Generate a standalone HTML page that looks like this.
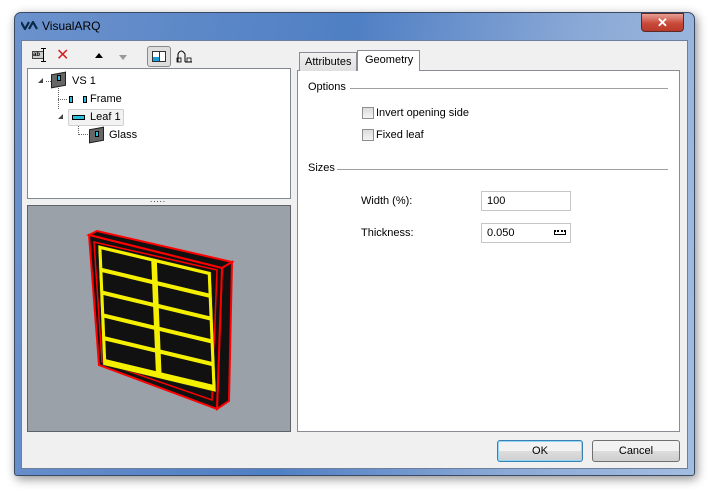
<!DOCTYPE html>
<html><head><style>
*{margin:0;padding:0;box-sizing:border-box}
body{width:712px;height:496px;background:#fff;position:relative;overflow:hidden;font-family:"Liberation Sans",sans-serif;font-size:11px;color:#000}
.a{position:absolute}
.win{left:14px;top:12px;width:681px;height:464px;border-radius:7px 7px 3px 3px;border:1px solid #3a4a66;background:linear-gradient(100deg,#6c92cc 0%,#4f7fc4 45%,#8ba9d6 75%,#a3bde0 100%);box-shadow:2px 3px 10px rgba(0,0,0,.45)}
.client{left:21px;top:40px;width:667px;height:429px;background:#f0f0f0;border:1px solid #6d7f9c}
.tb{font-size:12px;color:#000}
.cb{width:12px;height:12px;border:1px solid #8f8f8f;background:linear-gradient(#dcdcdc,#f4f4f4)}
.inp{height:20px;border:1px solid #c5c5c5;background:#fff;padding:3px 5px;font-size:11px}
.btn{height:22px;border:1px solid #707070;border-radius:3px;background:linear-gradient(#f2f2f2 50%,#dddddd 50%,#cfcfcf);text-align:center;line-height:20px;font-size:11px}
</style></head><body>
<div class="a win"></div>
<svg class="a" style="left:21px;top:21px" width="18" height="9"><path d="M0 1L4 8L8 1M8 8L12 1L16 8" fill="none" stroke="#0b2a4a" stroke-width="2.2"/></svg>
<div class="a tb" style="left:42px;top:19px">VisualARQ</div>
<div class="a" style="left:641px;top:13px;width:43px;height:19px;border:1px solid #5a2a2a;border-radius:0 0 4px 4px;background:linear-gradient(#e8a096,#c9493a 55%,#b83a2b);color:#fff;font-weight:bold;font-size:13px;text-align:center;line-height:17px">✕</div>
<div class="a client"></div>
<div class="a" style="left:32px;top:51px;width:12px;height:8px;border:1px solid #444;background:#ccc;font-size:6px;line-height:6px;font-weight:bold">ab</div>
<div class="a" style="left:43px;top:48px;width:1px;height:14px;background:#000"></div>
<div class="a" style="left:41px;top:48px;width:5px;height:1px;background:#000"></div>
<div class="a" style="left:41px;top:61px;width:5px;height:1px;background:#000"></div>
<div class="a" style="left:56px;top:45px;color:#d42020;font-size:16px">✕</div>
<div class="a" style="left:95px;top:53px;border:4px solid transparent;border-bottom:5px solid #000;border-top:0"></div>
<div class="a" style="left:119px;top:55px;border:4px solid transparent;border-top:5px solid #999;border-bottom:0"></div>
<div class="a" style="left:147px;top:46px;width:24px;height:21px;border:1px solid #8a8a8a;border-radius:3px;background:#dedede"></div>
<div class="a" style="left:152px;top:51px;width:14px;height:11px;border:1px solid #333;background:#fff"></div>
<div class="a" style="left:153px;top:57px;width:6px;height:4px;background:#1aa0d8"></div>
<div class="a" style="left:159px;top:51px;width:1px;height:11px;background:#333"></div>
<svg class="a" style="left:176px;top:48px" width="18" height="16"><path d="M2 14V6Q5 0 9 6V14M9 14H16" fill="none" stroke="#000"/><rect x="1" y="10" width="4" height="4" fill="none" stroke="#000" stroke-width=".8"/><rect x="11" y="10" width="4" height="4" fill="none" stroke="#000" stroke-width=".8"/></svg>
<div class="a" style="left:27px;top:68px;width:264px;height:131px;background:#fff;border:1px solid #828790"></div>
<svg class="a" style="left:37px;top:77px" width="8" height="8"><path d="M6 1V6H1Z" fill="#444"/></svg>
<svg class="a" style="left:57px;top:113px" width="8" height="8"><path d="M6 1V6H1Z" fill="#444"/></svg>
<div class="a" style="left:46px;top:81px;width:5px;border-top:1px dotted #666"></div>
<div class="a" style="left:58px;top:88px;height:21px;border-left:1px dotted #666"></div>
<div class="a" style="left:58px;top:99px;width:9px;border-top:1px dotted #666"></div>
<div class="a" style="left:78px;top:124px;height:11px;border-left:1px dotted #666"></div>
<div class="a" style="left:78px;top:134px;width:10px;border-top:1px dotted #666"></div>
<div class="a" style="left:51px;top:73px;width:15px;height:14px;background:#666;border:1px solid #222;transform:skewY(-10deg)"></div>
<div class="a" style="left:57px;top:75px;width:4px;height:6px;background:#29c0e0;border:1px solid #000"></div>
<div class="a" style="left:72px;top:75px;font-size:11px">VS 1</div>
<div class="a" style="left:69px;top:96px;width:4px;height:7px;border:1px solid #000;background:#29c0e0"></div>
<div class="a" style="left:83px;top:96px;width:4px;height:7px;border:1px solid #000;background:#29c0e0"></div>
<div class="a" style="left:90px;top:93px">Frame</div>
<div class="a" style="left:68px;top:109px;width:56px;height:17px;border:1px solid #d0d0d0;border-radius:2px;background:#f2f2f2"></div>
<div class="a" style="left:72px;top:115px;width:13px;height:5px;border:1px solid #000;background:#29c0e0"></div>
<div class="a" style="left:90px;top:111px">Leaf 1</div>
<div class="a" style="left:89px;top:128px;width:15px;height:14px;background:#666;border:1px solid #222;transform:skewY(-10deg)"></div>
<div class="a" style="left:95px;top:131px;width:4px;height:6px;background:#29c0e0;border:1px solid #000"></div>
<div class="a" style="left:109px;top:129px">Glass</div>
<div class="a" style="left:150px;top:197px;font-size:8px;letter-spacing:1px;line-height:6px">.....</div>
<div class="a" style="left:27px;top:205px;width:264px;height:227px;background:#9aa1a8;border:1px solid #5f6368"></div>
<svg class="a" style="left:0;top:0" width="300" height="440">
<polygon points="89,235 97,231 232,262 222,268" fill="#111" stroke="#f00" stroke-width="2"/>
<polygon points="222,268 232,262 229,401 217,409" fill="#111" stroke="#f00" stroke-width="2"/>
<polygon points="89,235 222,268 217,409 99,365" fill="#111" stroke="#f00" stroke-width="2"/>
<polygon points="94,242 217,270 212,400 102,362" fill="none" stroke="#f00" stroke-width="1.5"/>
<g transform="matrix(1.13 .27 .05 1.20 98 245)">
<rect x="0" y="0" width="100" height="100" fill="#f5f000" stroke="#222" stroke-width=".4"/>
<g fill="#111">
<rect x="3" y="3" width="44" height="15.5"/><rect x="52" y="3" width="45" height="15.5"/>
<rect x="3" y="22" width="44" height="15.5"/><rect x="52" y="22" width="45" height="15.5"/>
<rect x="3" y="41" width="44" height="15.5"/><rect x="52" y="41" width="45" height="15.5"/>
<rect x="3" y="60" width="44" height="15.5"/><rect x="52" y="60" width="45" height="15.5"/>
<rect x="3" y="79" width="44" height="15.5"/><rect x="52" y="79" width="45" height="15.5"/>
</g></g>
</svg>
<div class="a" style="left:297px;top:70px;width:383px;height:362px;background:#fff;border:1px solid #898c95"></div>
<div class="a" style="left:299px;top:52px;width:58px;height:19px;border:1px solid #898c95;border-bottom:0;background:linear-gradient(#f2f2f2,#e0e0e0);padding:3px 5px;font-size:11px">Attributes</div>
<div class="a" style="left:357px;top:50px;width:63px;height:21px;border:1px solid #898c95;border-bottom:0;background:#fff;padding:3px 7px;font-size:11px">Geometry</div>
<div class="a" style="left:308px;top:81px">Options</div>
<div class="a" style="left:350px;top:88px;width:318px;height:1px;background:#a0a0a0"></div>
<div class="a cb" style="left:362px;top:107px"></div><div class="a" style="left:376px;top:107px">Invert opening side</div>
<div class="a cb" style="left:362px;top:129px"></div><div class="a" style="left:376px;top:129px">Fixed leaf</div>
<div class="a" style="left:308px;top:162px">Sizes</div>
<div class="a" style="left:337px;top:169px;width:331px;height:1px;background:#a0a0a0"></div>
<div class="a" style="left:361px;top:195px">Width (%):</div>
<div class="a inp" style="left:481px;top:191px;width:90px">100</div>
<div class="a" style="left:361px;top:227px">Thickness:</div>
<div class="a inp" style="left:481px;top:223px;width:90px">0.050</div>
<div class="a" style="left:554px;top:230px;width:12px;height:5px;border:1px solid #000;border-top:2px dotted #000"></div>
<div class="a btn" style="left:497px;top:440px;width:86px;border-color:#3c7fb1;box-shadow:inset 0 0 0 1px #8fd6f8">OK</div>
<div class="a btn" style="left:592px;top:440px;width:88px">Cancel</div>
</body></html>
